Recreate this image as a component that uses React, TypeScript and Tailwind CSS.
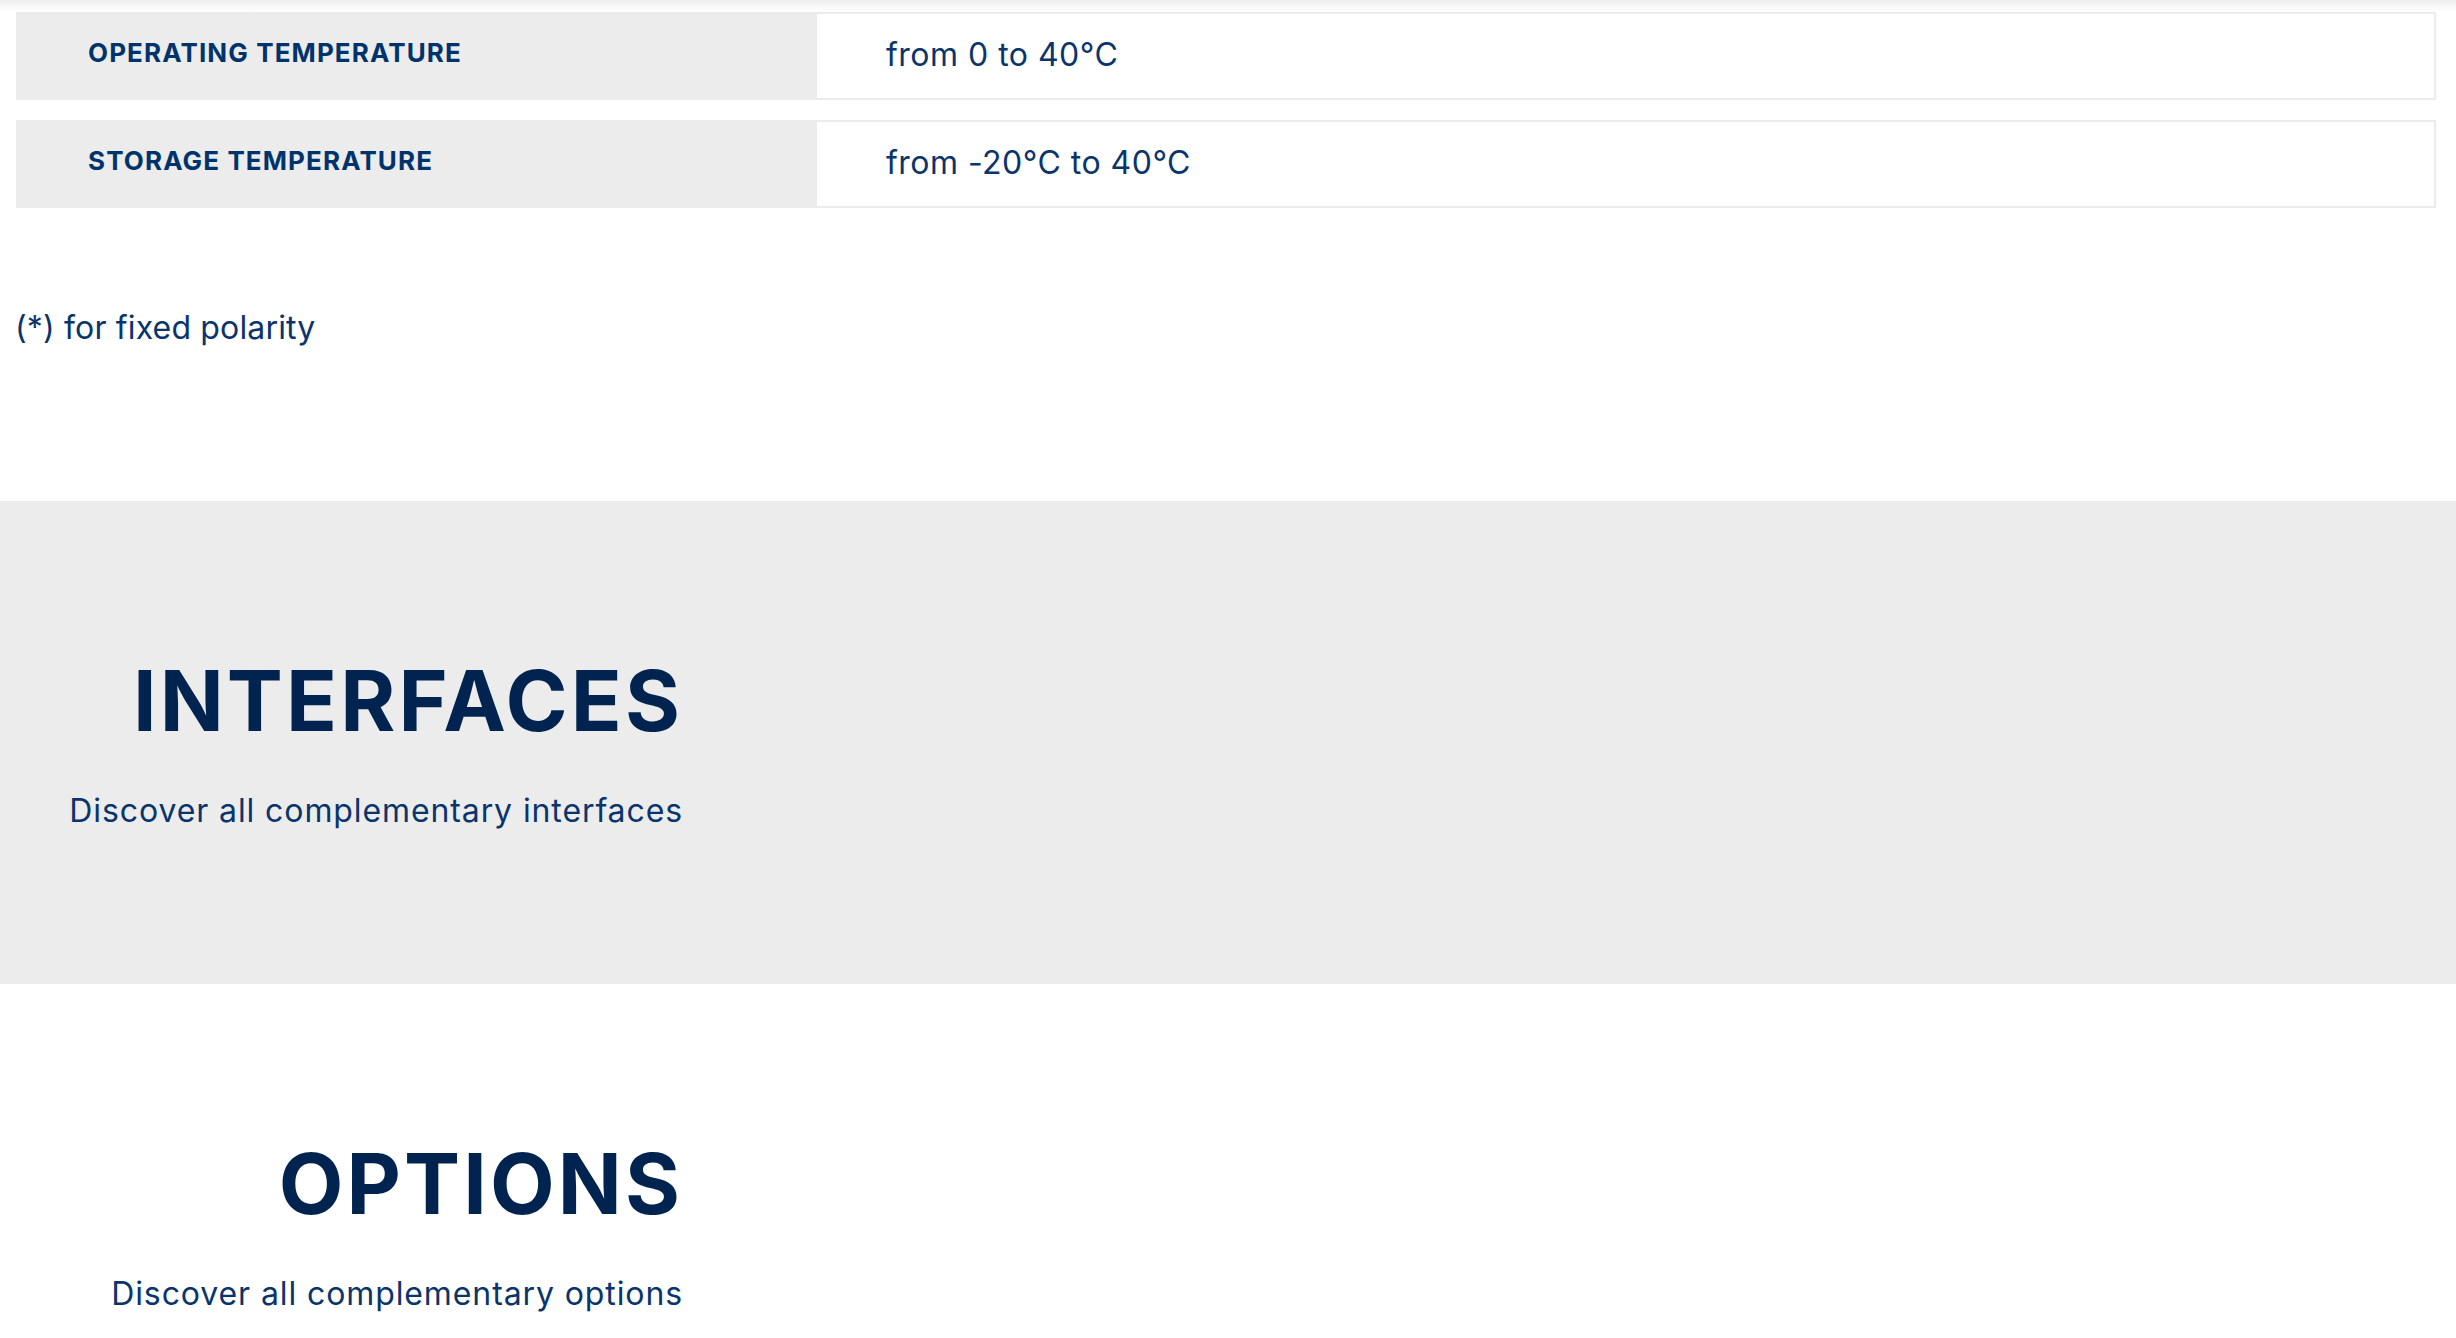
const specs = [
  { label: "OPERATING TEMPERATURE", value: "from 0 to 40°C" },
  { label: "STORAGE TEMPERATURE", value: "from -20°C to 40°C" },
];

type SectionProps = {
  title: string;
  subtitle: string;
  className?: string;
};

const Section = ({ title, subtitle, className = "" }: SectionProps) => {
  return (
    <section className={`w-full pt-[158px] pb-[157px] ${className}`}>
      <div className="w-[683px] flex flex-col items-end">
        <h2 className="m-0 text-[84px] leading-none font-bold tracking-[0.037em] text-[#01234f]">
          {title}
        </h2>
        <p className="mt-[52px] text-[32px] leading-none tracking-[0.028em] text-[#0a346c]">
          {subtitle}
        </p>
      </div>
    </section>
  );
};

const App = () => {
  return (
    <div className="w-full min-h-screen bg-white font-[Inter,sans-serif] overflow-hidden">
      <div className="h-[12px] bg-linear-to-b from-[#eeeeee] to-white" />
      <div className="flex flex-col gap-[20px] pl-[16px] pr-[20px]">
        {specs.map((row) => (
          <div key={row.label} className="flex h-[88px]">
            <div className="w-[799px] bg-[#ececec] pl-[72px] pt-[28px]">
              <span className="text-[26px] leading-none font-bold tracking-[0.043em] text-[#00336b]">
                {row.label}
              </span>
            </div>
            <div className="flex-1 bg-white border-2 border-[#ebebeb] pl-[69px] pt-[25px]">
              <span className="text-[32px] leading-none tracking-[0.015em] text-[#0a346c]">
                {row.value}
              </span>
            </div>
          </div>
        ))}
      </div>
      <p className="mt-[104px] ml-[15px] text-[32px] leading-none tracking-[0.005em] text-[#0a346c]">
        (*) for fixed polarity
      </p>
      <Section
        title="INTERFACES"
        subtitle="Discover all complementary interfaces"
        className="mt-[157px] bg-[#ececec]"
      />
      <Section title="OPTIONS" subtitle="Discover all complementary options" />
    </div>
  );
};

export default App;
